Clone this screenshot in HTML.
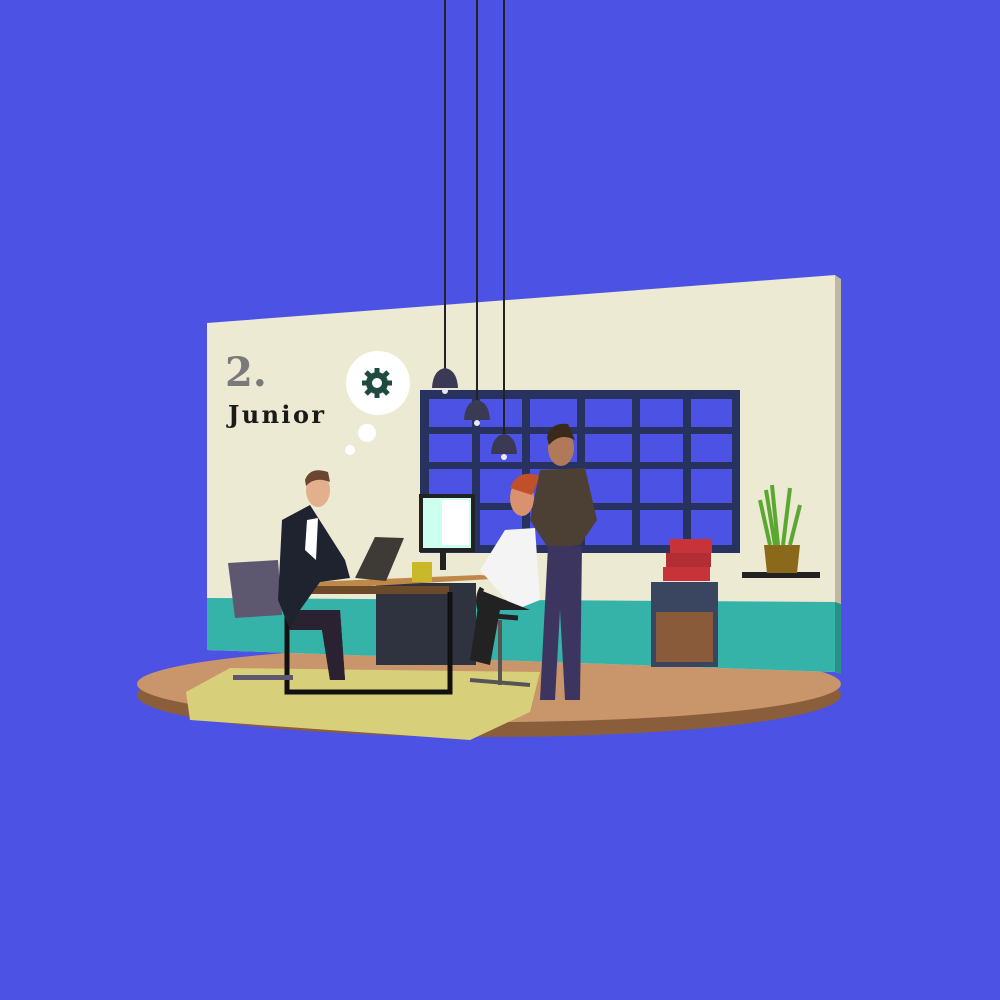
<!DOCTYPE html>
<html><head><style>
html,body{margin:0;padding:0;width:1000px;height:1000px;overflow:hidden;background:#4b52e4}
svg{display:block}
</style></head><body>
<svg width="1000" height="1000" viewBox="0 0 1000 1000" xmlns="http://www.w3.org/2000/svg">
<rect width="1000" height="1000" fill="#4b52e4"/>
<ellipse cx="489" cy="695" rx="352" ry="42" fill="#8a5e3a"/>
<ellipse cx="489" cy="684" rx="352" ry="38" fill="#c9956a"/>
<polygon points="207,323 835,275 835,672 207,650" fill="#ecead2"/>
<polygon points="835,275 841,279 841,674 835,672" fill="#bdb9a0"/>
<polygon points="207,598 835,602 835,672 207,650" fill="#35b3a8"/>
<polygon points="835,602 841,604 841,674 835,672" fill="#2a8f87"/>
<polygon points="186,692 230,668 540,672 530,712 470,740 190,720" fill="#d8cf7a"/>
<rect x="420" y="390" width="320" height="163" fill="#27325e"/>
<g fill="#4b52e4">
<rect x="429" y="399" width="43" height="28"/><rect x="480" y="399" width="42" height="28"/><rect x="530" y="399" width="47" height="28"/><rect x="585" y="399" width="47" height="28"/><rect x="640" y="399" width="43" height="28"/><rect x="691" y="399" width="41" height="28"/>
<rect x="429" y="434" width="43" height="28"/><rect x="480" y="434" width="42" height="28"/><rect x="530" y="434" width="47" height="28"/><rect x="585" y="434" width="47" height="28"/><rect x="640" y="434" width="43" height="28"/><rect x="691" y="434" width="41" height="28"/>
<rect x="429" y="469" width="43" height="34"/><rect x="480" y="469" width="42" height="34"/><rect x="530" y="469" width="47" height="34"/><rect x="585" y="469" width="47" height="34"/><rect x="640" y="469" width="43" height="34"/><rect x="691" y="469" width="41" height="34"/>
<rect x="429" y="510" width="43" height="35"/><rect x="480" y="510" width="42" height="35"/><rect x="530" y="510" width="47" height="35"/><rect x="585" y="510" width="47" height="35"/><rect x="640" y="510" width="43" height="35"/><rect x="691" y="510" width="41" height="35"/>
</g>
<g stroke="#222" stroke-width="2"><line x1="445" y1="0" x2="445" y2="370"/><line x1="477" y1="0" x2="477" y2="400"/><line x1="504" y1="0" x2="504" y2="434"/></g>
<g fill="#3b3a55"><path d="M432,388 Q433,370 445,368 Q457,370 458,388Z"/><path d="M464,420 Q465,402 477,400 Q489,402 490,420Z"/><path d="M491,454 Q492,436 504,434 Q516,436 517,454Z"/></g>
<g fill="#e8e8f0"><circle cx="445" cy="391" r="3"/><circle cx="477" cy="423" r="3"/><circle cx="504" cy="457" r="3"/></g>
<text x="225" y="386" font-family="DejaVu Serif,serif" font-weight="bold" font-size="40" fill="#7a7a7a">2.</text>
<text x="228" y="423" font-family="DejaVu Serif,serif" font-weight="bold" font-size="24" fill="#1a1a1a" textLength="96">Junior</text>
<circle cx="378" cy="383" r="32" fill="#fff"/>
<circle cx="367" cy="433" r="9" fill="#fff"/>
<circle cx="350" cy="450" r="5" fill="#fff"/>
<g fill="#1f4a40"><circle cx="377" cy="383" r="11"/>
<g stroke="#1f4a40" stroke-width="5"><line x1="377" y1="368" x2="377" y2="398"/><line x1="362" y1="383" x2="392" y2="383"/><line x1="366" y1="372" x2="388" y2="394"/><line x1="388" y1="372" x2="366" y2="394"/></g></g>
<circle cx="377" cy="383" r="5" fill="#fff"/>
<rect x="742" y="572" width="78" height="6" fill="#222"/>
<polygon points="764,545 800,545 797,573 767,573" fill="#8a6a1a"/>
<path d="M770,545 L760,500 M778,545 L772,485 M783,545 L790,488 M790,545 L800,505 M775,545 L766,490" stroke="#5aa832" stroke-width="4"/>
<rect x="651" y="582" width="67" height="85" fill="#3a4560"/>
<rect x="656" y="612" width="57" height="50" fill="#8a5b3a"/>
<rect x="663" y="567" width="47" height="14" fill="#c8333a"/>
<rect x="666" y="553" width="45" height="14" fill="#b32d35"/>
<rect x="670" y="539" width="42" height="14" fill="#c8333a"/>
<rect x="376" y="583" width="100" height="82" fill="#2f3340"/>
<rect x="419" y="494" width="56" height="58" fill="#222"/>
<rect x="423" y="498" width="48" height="50" fill="#cfe"/>
<rect x="442" y="500" width="27" height="45" fill="#fff"/>
<rect x="440" y="552" width="6" height="18" fill="#222"/>
<polygon points="284,583 480,575 510,578 300,590" fill="#c08848"/>
<rect x="284" y="586" width="165" height="8" fill="#6b4a2a"/>
<path d="M287,592 V692 H450 V592" stroke="#111" stroke-width="5" fill="none"/>
<rect x="412" y="562" width="20" height="20" fill="#c9b82a"/>
<polygon points="228,563 278,560 282,615 235,618" fill="#5d5870"/>
<rect x="233" y="675" width="60" height="5" fill="#5d5870"/>
<polygon points="282,520 310,505 345,560 350,578 320,582 300,610 340,610 345,680 330,680 322,630 290,630 278,600" fill="#1f2330"/>
<polygon points="300,610 340,610 345,680 330,680 322,630 290,630" fill="#2a2230"/>
<ellipse cx="318" cy="490" rx="12" ry="17" fill="#e2b08c"/>
<path d="M305,480 Q310,466 328,472 L330,482 Q315,476 306,486Z" fill="#6a4630"/>
<polygon points="307,520 318,518 316,560 305,550" fill="#fff"/>
<polygon points="355,578 375,537 404,538 386,581" fill="#3e3a36"/>
<ellipse cx="522" cy="498" rx="12" ry="18" fill="#d99170"/>
<path d="M510,488 Q518,468 540,476 L532,495Z" fill="#c0502a"/>
<polygon points="505,530 535,528 540,600 515,610 480,570" fill="#f4f4f4"/>
<path d="M480,590 Q475,630 470,660 L490,665 L500,610 L530,610" fill="#222"/>
<path d="M482,588 Q475,600 482,615 L518,618" stroke="#222" stroke-width="5" fill="none"/>
<path d="M470,680 L530,685 M500,620 V685" stroke="#555" stroke-width="4"/>
<polygon points="540,470 585,468 597,520 580,545 548,548 530,520" fill="#4b4033"/>
<polygon points="548,546 582,546 580,700 565,700 560,610 555,700 540,700" fill="#3c3560"/>
<ellipse cx="561" cy="448" rx="13" ry="18" fill="#b07a5a"/>
<path d="M547,438 Q550,422 568,424 L575,440 Q560,432 549,445Z" fill="#3a2a1a"/>
</svg>
</body></html>
